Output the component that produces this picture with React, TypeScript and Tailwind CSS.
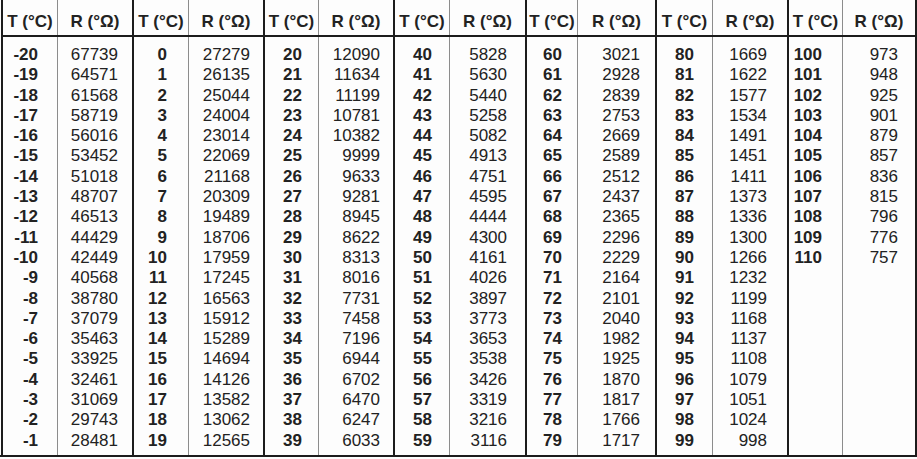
const groups = [
  {
    start: -20,
    values: [67739, 64571, 61568, 58719, 56016, 53452, 51018, 48707, 46513, 44429, 42449, 40568, 38780, 37079, 35463, 33925, 32461, 31069, 29743, 28481],
    w: 'w-[131px]', tw: 'w-[55px]', tpr: 'pr-[19px]', rpr: 'pr-[14px]',
  },
  {
    start: 0,
    values: [27279, 26135, 25044, 24004, 23014, 22069, 21168, 20309, 19489, 18706, 17959, 17245, 16563, 15912, 15289, 14694, 14126, 13582, 13062, 12565],
    w: 'w-[131px]', tw: 'w-[55px]', tpr: 'pr-[21px]', rpr: 'pr-[13px]',
  },
  {
    start: 20,
    values: [12090, 11634, 11199, 10781, 10382, 9999, 9633, 9281, 8945, 8622, 8313, 8016, 7731, 7458, 7196, 6944, 6702, 6470, 6247, 6033],
    w: 'w-[130px]', tw: 'w-[54px]', tpr: 'pr-[16px]', rpr: 'pr-[13px]',
  },
  {
    start: 40,
    values: [5828, 5630, 5440, 5258, 5082, 4913, 4751, 4595, 4444, 4300, 4161, 4026, 3897, 3773, 3653, 3538, 3426, 3319, 3216, 3116],
    w: 'w-[132px]', tw: 'w-[55px]', tpr: 'pr-[17px]', rpr: 'pr-[18px]',
  },
  {
    start: 60,
    values: [3021, 2928, 2839, 2753, 2669, 2589, 2512, 2437, 2365, 2296, 2229, 2164, 2101, 2040, 1982, 1925, 1870, 1817, 1766, 1717],
    w: 'w-[130px]', tw: 'w-[51px]', tpr: 'pr-[15px]', rpr: 'pr-[15px]',
  },
  {
    start: 80,
    values: [1669, 1622, 1577, 1534, 1491, 1451, 1411, 1373, 1336, 1300, 1266, 1232, 1199, 1168, 1137, 1108, 1079, 1051, 1024, 998],
    w: 'w-[132px]', tw: 'w-[56px]', tpr: 'pr-[18px]', rpr: 'pr-[20px]',
  },
  {
    start: 100,
    values: [973, 948, 925, 901, 879, 857, 836, 815, 796, 776, 757],
    w: 'w-[130px] border-r-2', tw: 'w-[54px]', tpr: 'pr-[20px]', rpr: 'pr-[17px]',
  },
];

function Group({ g }: { g: (typeof groups)[number] }) {
  return (
    <div className={`${g.w} flex flex-col border-l-2 border-[#1c1c1c]`}>
      <div className="flex h-[37px] border-b-2 border-[#1c1c1c] font-bold">
        <div className={`${g.tw} shrink-0 border-r border-[#8c8c8c] pt-[9px] text-center`}>T (°C)</div>
        <div className="flex-1 pt-[9px] text-center">R (°Ω)</div>
      </div>
      <div className="flex flex-1">
        <div className={`${g.tw} shrink-0 border-r border-[#8c8c8c] pt-[8px] ${g.tpr} text-right font-bold`}>
          {g.values.map((_, i) => (
            <div key={i} className="h-[20.3px] leading-[20.3px]">{g.start + i}</div>
          ))}
        </div>
        <div className={`flex-1 pt-[8px] ${g.rpr} text-right`}>
          {g.values.map((v, i) => (
            <div key={i} className="h-[20.3px] leading-[20.3px]">{v}</div>
          ))}
        </div>
      </div>
    </div>
  );
}

export default function App() {
  return (
    <div className="h-[459px] w-[917px] overflow-hidden bg-[#fdfdfd] font-['Liberation_Sans',Arial,sans-serif] text-[17px] text-[#222222]">
      <div className="flex h-[457px] border-b-2 border-[#1c1c1c] pl-[1px]">
        {groups.map((g) => (
          <Group key={g.start} g={g} />
        ))}
      </div>
    </div>
  );
}
